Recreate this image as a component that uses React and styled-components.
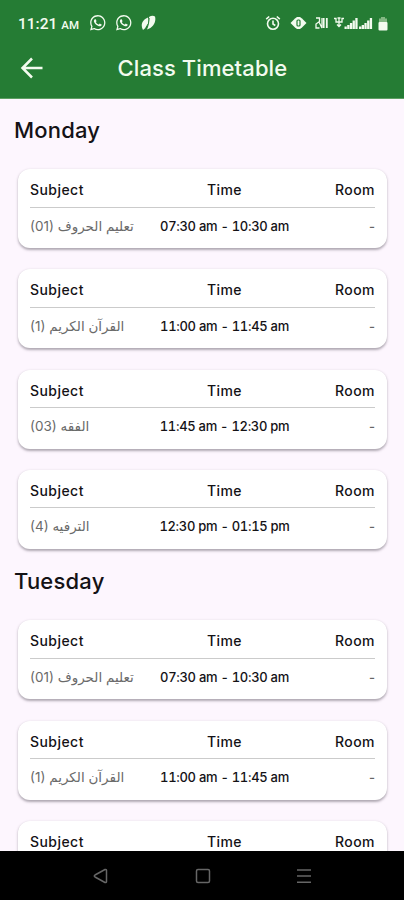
import React from 'react'

import styled, { createGlobalStyle } from 'styled-components'
import { FaWhatsapp } from 'react-icons/fa'

const GlobalStyle = createGlobalStyle`
    * {
        box-sizing: border-box;
    }
    body {
        margin: 0;
        background-color: #fdf6fe;
    }
`

const Screen = styled.div`
    display: flex;
    flex-direction: column;
    width: 404px;
    height: 900px;
    overflow: hidden;
    background-color: #fdf6fe;
    font-family: Inter, "Noto Sans", "DejaVu Sans", sans-serif;
    color: #141216;
`

const Header = styled.header`
    flex: none;
    height: 99px;
    background-color: #257c34;
    border-bottom: 1px solid #5d9f62;
    color: #f3fbef;
`

const StatusBar = styled.div`
    display: flex;
    justify-content: space-between;
    align-items: center;
    height: 38px;
    padding: 8px 16px 0 18px;
`

const StatusGroup = styled.div`
    display: flex;
    align-items: center;
    gap: ${props => props.$gap || 0}px;
    svg {
        display: block;
        flex: none;
    }
`

const Clock = styled.div`
    width: 62px;
    padding-top: 2px;
    font-family: Roboto, sans-serif;
    font-size: 15.5px;
    font-weight: 500;
    line-height: 18px;
    white-space: nowrap;
    small {
        margin-left: 4px;
        font-size: 11.5px;
    }
`

const AppBar = styled.div`
    display: flex;
    align-items: center;
    height: 60px;
    padding-left: 20px;
`

const BackButton = styled.button`
    display: flex;
    width: 24px;
    height: 24px;
    padding: 0;
    border: 0;
    background: none;
    color: inherit;
`

const Title = styled.h1`
    margin: 0 0 0 73.5px;
    font-size: 22px;
    font-weight: 500;
    line-height: 28px;
    letter-spacing: 0.1px;
    white-space: nowrap;
`

const Content = styled.main`
    flex: 1;
    min-height: 0;
    overflow: hidden;
`

const DayName = styled.h2`
    margin: 0;
    padding: 17px 0 0 14px;
    height: 50px;
    font-size: 22px;
    font-weight: 500;
    line-height: 28px;
    letter-spacing: 0.2px;
`

const CardList = styled.div`
    display: flex;
    flex-direction: column;
    gap: 21.3px;
    padding: 20px 17.5px 1.5px 18px;
`

const Card = styled.section`
    height: 79px;
    padding: 11px 11.5px 0 12px;
    border-radius: 12px;
    background-color: #fff;
    box-shadow: 0 1.5px 2.5px rgba(40, 30, 45, 0.36);
`

const Row = styled.div`
    display: grid;
    grid-template-columns: 129px 131px 1fr;
    align-items: center;
    white-space: nowrap;
`

const HeadRow = styled(Row)`
    height: 27.5px;
    padding-bottom: 7px;
    border-bottom: 1px solid #cbcbcb;
    font-size: 14px;
    font-weight: 500;
    line-height: 20px;
    letter-spacing: 0.45px;
`

const LessonRow = styled(Row)`
    height: 36px;
    font-size: 13px;
    font-weight: 500;
    line-height: 20px;
`

const Cell = styled.span`
    text-align: ${props => props.$align || 'left'};
`

const Subject = styled(Cell)`
    color: #6a6a6a;
    font-size: 13.5px;
    font-weight: 400;
`

const Time = styled(Cell)`
    font-variant-numeric: tabular-nums;
    letter-spacing: -0.3px;
`

const Room = styled(Cell)`
    color: #666;
`

const NavBar = styled.nav`
    flex: none;
    display: flex;
    justify-content: space-between;
    height: 49px;
    padding: 17px 92px 0;
    background-color: #000;
    color: #666;
`

const days = [
    {
        name: 'Monday',
        lessons: [
            { subject: 'تعليم الحروف', number: '(01)', time: '07:30 am - 10:30 am' },
            { subject: 'القرآن الكريم', number: '(1)', time: '11:00 am - 11:45 am' },
            { subject: 'الفقه', number: '(03)', time: '11:45 am - 12:30 pm' },
            { subject: 'الترفيه', number: '(4)', time: '12:30 pm - 01:15 pm' },
        ],
    },
    {
        name: 'Tuesday',
        lessons: [
            { subject: 'تعليم الحروف', number: '(01)', time: '07:30 am - 10:30 am' },
            { subject: 'القرآن الكريم', number: '(1)', time: '11:00 am - 11:45 am' },
            {},
        ],
    },
]

const LeafIcon = () => (
    <svg width="15" height="16" viewBox="0 0 15 16" fill="currentColor">
        <path d="M2 15C-.5 10.500.500 5 7 2.500 8.500 7 6.500 12 2 15Z" />
        <path d="M6 14.500C7.500 11 8.500 8 8 2 10 .6 12.500.300 14 1.500 15.500 7 12 13 6 14.500Z" />
        <path fill="none" stroke="#257c34" strokeWidth=".9" d="M4.800 12.500Q8.500 9 8.200 3" />
    </svg>
)

const AlarmIcon = () => (
    <svg width="16" height="16" viewBox="0 0 16 16" fill="none" stroke="currentColor" strokeWidth="1.600">
        <circle cx="8" cy="8.700" r="5.500" />
        <path d="M8 5.500V9l2.300 1.500M1.200 4.200 4.200 1.500M14.800 4.200 11.800 1.500" />
    </svg>
)

const VibrateIcon = () => (
    <svg width="17" height="14" viewBox="0 0 17 14">
        <path fill="currentColor" d="M5 2.500 7 1h3l2 1.500L16.500 7 12 11.500 10 13H7l-2-1.500L.5 7Z" />
        <rect x="7" y="4" width="3" height="6" rx="1" fill="none" stroke="#257c34" strokeWidth="1.200" />
    </svg>
)

const NetworkIcon = () => (
    <svg width="13" height="12" viewBox="0 0 13 12" fill="none" stroke="currentColor">
        <path strokeWidth="1.300" d="M1 1h3.500v3.500L1 7v4h3.500M4 5 7 11V1" />
        <path strokeWidth="1.800" d="M8.700 1v10M11.800 1v10" />
    </svg>
)

const SignalIcon = () => (
    <svg width="40" height="14" viewBox="0 0 40 14">
        <path fill="none" stroke="currentColor" strokeWidth="1.300" d="M1 2.500h2v3.500h6V2.500h2M4.500 2h3M6 2v8M4 8.500 6 10.500 8 8.500" />
        <g fill="currentColor">
            <path d="M11.500 10.500h2.300V13h-2.300zM14.200 9h2.300v4h-2.300zM16.900 7h2.300v6h-2.300zM19.600 4.500h2.300V13h-2.300zM22.300 2h2.300v11h-2.300z" />
            <path d="M26 10.500h2.300V13H26zM28.700 9H31v4h-2.300zM31.400 7h2.300v6h-2.300zM34.100 4.500h2.300V13h-2.300zM36.800 2h2.300v11h-2.300z" />
        </g>
    </svg>
)

const BatteryIcon = () => (
    <svg width="10" height="15" viewBox="0 0 10 15">
        <path fill="#83b783" d="M3 1h4v2H3zM1 2.500h8v4H1z" />
        <rect x=".5" y="6" width="9" height="8.500" rx="1" fill="currentColor" />
    </svg>
)

const LessonCard = props => (
    <Card>
        <HeadRow>
            <Cell>Subject</Cell>
            <Cell $align="center">Time</Cell>
            <Cell $align="right">Room</Cell>
        </HeadRow>
        {props.time && (
            <LessonRow>
                <Subject><bdi>{props.number}</bdi> <bdi>{props.subject}</bdi></Subject>
                <Time $align="center">{props.time}</Time>
                <Room $align="right">-</Room>
            </LessonRow>
        )}
    </Card>
)

const App = () => {
    return (
        <Screen>
            <GlobalStyle />
            <Header>
                <StatusBar>
                    <StatusGroup $gap={8.5}>
                        <Clock>11:21<small>AM</small></Clock>
                        <FaWhatsapp size={17.5} />
                        <FaWhatsapp size={17.5} />
                        <LeafIcon />
                    </StatusGroup>
                    <StatusGroup $gap={8}>
                        <StatusGroup $gap={9}>
                            <AlarmIcon />
                            <VibrateIcon />
                        </StatusGroup>
                        <StatusGroup $gap={5}>
                            <NetworkIcon />
                            <SignalIcon />
                            <BatteryIcon />
                        </StatusGroup>
                    </StatusGroup>
                </StatusBar>
                <AppBar>
                    <BackButton aria-label="Back">
                        <svg width="24" height="24" viewBox="0 0 24 24" fill="none" stroke="currentColor" strokeWidth="2.500">
                            <path d="M22.500 12H3M12 2.500 2.500 12 12 21.500" />
                        </svg>
                    </BackButton>
                    <Title>Class Timetable</Title>
                </AppBar>
            </Header>
            <Content>
                {days.map(day => (
                    <div key={day.name}>
                        <DayName>{day.name}</DayName>
                        <CardList>
                            {day.lessons.map((lesson, i) => <LessonCard key={i} {...lesson} />)}
                        </CardList>
                    </div>
                ))}
            </Content>
            <NavBar>
                <svg width="17" height="16" viewBox="0 0 17 16" fill="none" stroke="currentColor" strokeWidth="1.500" strokeLinejoin="round">
                    <path d="M13 1.500 3 7q-1.500 1 0 2l10 5.500q1.500.3 1.500-1V2.500q0-1.300-1.500-1Z" />
                </svg>
                <svg width="16" height="16" viewBox="0 0 16 16" fill="none" stroke="currentColor" strokeWidth="1.500">
                    <rect x="1.500" y="1.500" width="13" height="13" rx="1.500" />
                </svg>
                <svg width="16" height="16" viewBox="0 0 16 16" stroke="currentColor" strokeWidth="1.500">
                    <path d="M1 2h14M1 8h14M1 14.300h14" />
                </svg>
            </NavBar>
        </Screen>
    )
}

export default App
